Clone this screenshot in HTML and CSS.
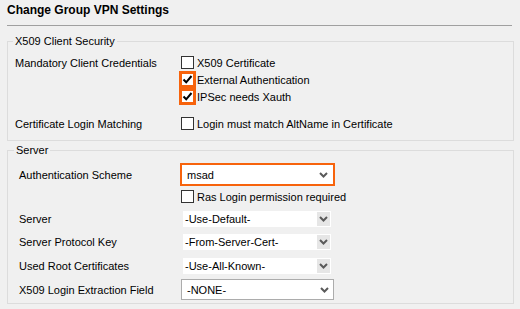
FILE: index.html
```html
<!DOCTYPE html>
<html>
<head>
<meta charset="utf-8">
<link rel="stylesheet" href="styles.css">
</head>
<body>
<div class="page">
  <h1 class="title">Change Group VPN Settings</h1>
  <div class="sep"></div>

  <fieldset class="group g1">
    <legend>X509 Client Security</legend>
    <div class="row r1">
      <span class="label">Mandatory Client Credentials</span>
      <span class="cb"><span class="box"></span>X509 Certificate</span>
    </div>
    <div class="row r2">
      <span class="label"></span>
      <span class="cb"><span class="box checked hl"><svg width="11" height="11" viewBox="0 0 11 11"><path d="M1.5 5.5 L4.2 8.3 L9.5 2" fill="none" stroke="#000" stroke-width="2"/></svg></span>External Authentication</span>
    </div>
    <div class="row r3">
      <span class="label"></span>
      <span class="cb"><span class="box checked hl"><svg width="11" height="11" viewBox="0 0 11 11"><path d="M1.5 5.5 L4.2 8.3 L9.5 2" fill="none" stroke="#000" stroke-width="2"/></svg></span>IPSec needs Xauth</span>
    </div>
    <div class="row r4">
      <span class="label">Certificate Login Matching</span>
      <span class="cb"><span class="box"></span>Login must match AltName in Certificate</span>
    </div>
  </fieldset>

  <fieldset class="group g2">
    <legend>Server</legend>
    <div class="row s-auth">
      <span class="label">Authentication Scheme</span>
      <span class="sel orange"><span class="txt">msad</span><span class="arr"><svg width="9" height="6" viewBox="0 0 9 6"><path d="M1 1 L4.5 4.5 L8 1" fill="none" stroke="#5a5a5a" stroke-width="2"/></svg></span></span>
    </div>
    <div class="row s-ras">
      <span class="label"></span>
      <span class="cb ras"><span class="box"></span>Ras Login permission required</span>
    </div>
    <div class="row s-flat s1">
      <span class="label">Server</span>
      <span class="sel flat"><span class="txt">-Use-Default-</span><span class="arr"><svg width="9" height="6" viewBox="0 0 9 6"><path d="M1 1 L4.5 4.5 L8 1" fill="none" stroke="#5a5a5a" stroke-width="2"/></svg></span></span>
    </div>
    <div class="row s-flat s2">
      <span class="label">Server Protocol Key</span>
      <span class="sel flat"><span class="txt">-From-Server-Cert-</span><span class="arr"><svg width="9" height="6" viewBox="0 0 9 6"><path d="M1 1 L4.5 4.5 L8 1" fill="none" stroke="#5a5a5a" stroke-width="2"/></svg></span></span>
    </div>
    <div class="row s-flat s3">
      <span class="label">Used Root Certificates</span>
      <span class="sel flat"><span class="txt">-Use-All-Known-</span><span class="arr"><svg width="9" height="6" viewBox="0 0 9 6"><path d="M1 1 L4.5 4.5 L8 1" fill="none" stroke="#5a5a5a" stroke-width="2"/></svg></span></span>
    </div>
    <div class="row s-box">
      <span class="label">X509 Login Extraction Field</span>
      <span class="sel bordered"><span class="txt">-NONE-</span><span class="arr"><svg width="9" height="6" viewBox="0 0 9 6"><path d="M1 1 L4.5 4.5 L8 1" fill="none" stroke="#5a5a5a" stroke-width="2"/></svg></span></span>
    </div>
  </fieldset>
</div>
</body>
</html>
```

FILE: styles.css
```css
html, body {
  margin: 0;
  padding: 0;
  background: #f0f0f0;
}
body {
  font-family: "Liberation Sans", Arial, sans-serif;
  font-size: 11px;
  color: #000;
  width: 520px;
  height: 309px;
  overflow: hidden;
}
.page {
  padding-top: 3px;
}
.title {
  margin: 0 0 0 7px;
  font-size: 12px;
  font-weight: bold;
  line-height: 15px;
  height: 15px;
}
.sep {
  margin: 7px 0 0 7px;
  width: 505px;
  height: 1px;
  background: #a0a0a0;
}
.group {
  margin: 0 0 0 7px;
  width: 507px;
  box-sizing: border-box;
  border: 1px solid #dcdcdc;
  padding: 0;
  min-width: 0;
}
.group legend {
  padding: 0 2px;
  line-height: 13px;
  font-size: 11px;
}
.g1 {
  margin-top: 9px;
  padding: 6px 0 8px 7px;
}
.g1 legend {
  margin-left: -2px;
}
.g2 {
  margin-top: 3px;
  padding: 6px 0 3px 11px;
}
.g2 legend {
  margin-left: -5px;
}
.row {
  display: flex;
  align-items: center;
  height: 17px;
}
.label {
  flex: none;
}
.g1 .label {
  width: 166px;
}
.g2 .label {
  width: 164px;
}
.r4 {
  margin-top: 10px;
}
.cb {
  display: flex;
  align-items: center;
}
.box {
  flex: none;
  width: 13px;
  height: 13px;
  box-sizing: border-box;
  border: 1px solid #333;
  background: #fff;
  margin-right: 3px;
  display: flex;
  align-items: center;
  justify-content: center;
}
.box.hl {
  outline: 2px solid #f7630c;
  border-color: #f7630c;
}
.box svg {
  display: block;
}
.ras {
  margin-left: -2px;
}
.s-auth {
  height: 23px;
}
.s-ras {
  margin-top: 2px;
}
.s-flat {
  height: 16px;
}
.s1 {
  margin-top: 6px;
}
.s2 {
  margin-top: 7px;
}
.s3 {
  margin-top: 8px;
}
.s-box {
  margin-top: 5px;
  height: 21px;
}
.sel {
  display: flex;
  align-items: center;
  box-sizing: border-box;
  background: #fff;
}
.sel .txt {
  flex: 1;
  white-space: nowrap;
}
.sel .arr {
  flex: none;
  display: flex;
  align-items: center;
  justify-content: center;
}
.sel .arr svg {
  display: block;
}
.orange {
  margin-left: -3px;
  width: 155px;
  height: 23px;
  border: 2px solid #f7630c;
  padding: 0 5px 0 5px;
}
.flat {
  width: 148px;
  height: 16px;
  padding: 1px 1px 1px 1px;
}
.flat .txt {
  padding-left: 1px;
}
.flat .arr {
  width: 13px;
  height: 14px;
  background: #e6e6e6;
}
.bordered {
  margin-left: -2px;
  width: 153px;
  height: 21px;
  border: 1px solid #acacac;
  padding: 0 4px 0 5px;
}
```
